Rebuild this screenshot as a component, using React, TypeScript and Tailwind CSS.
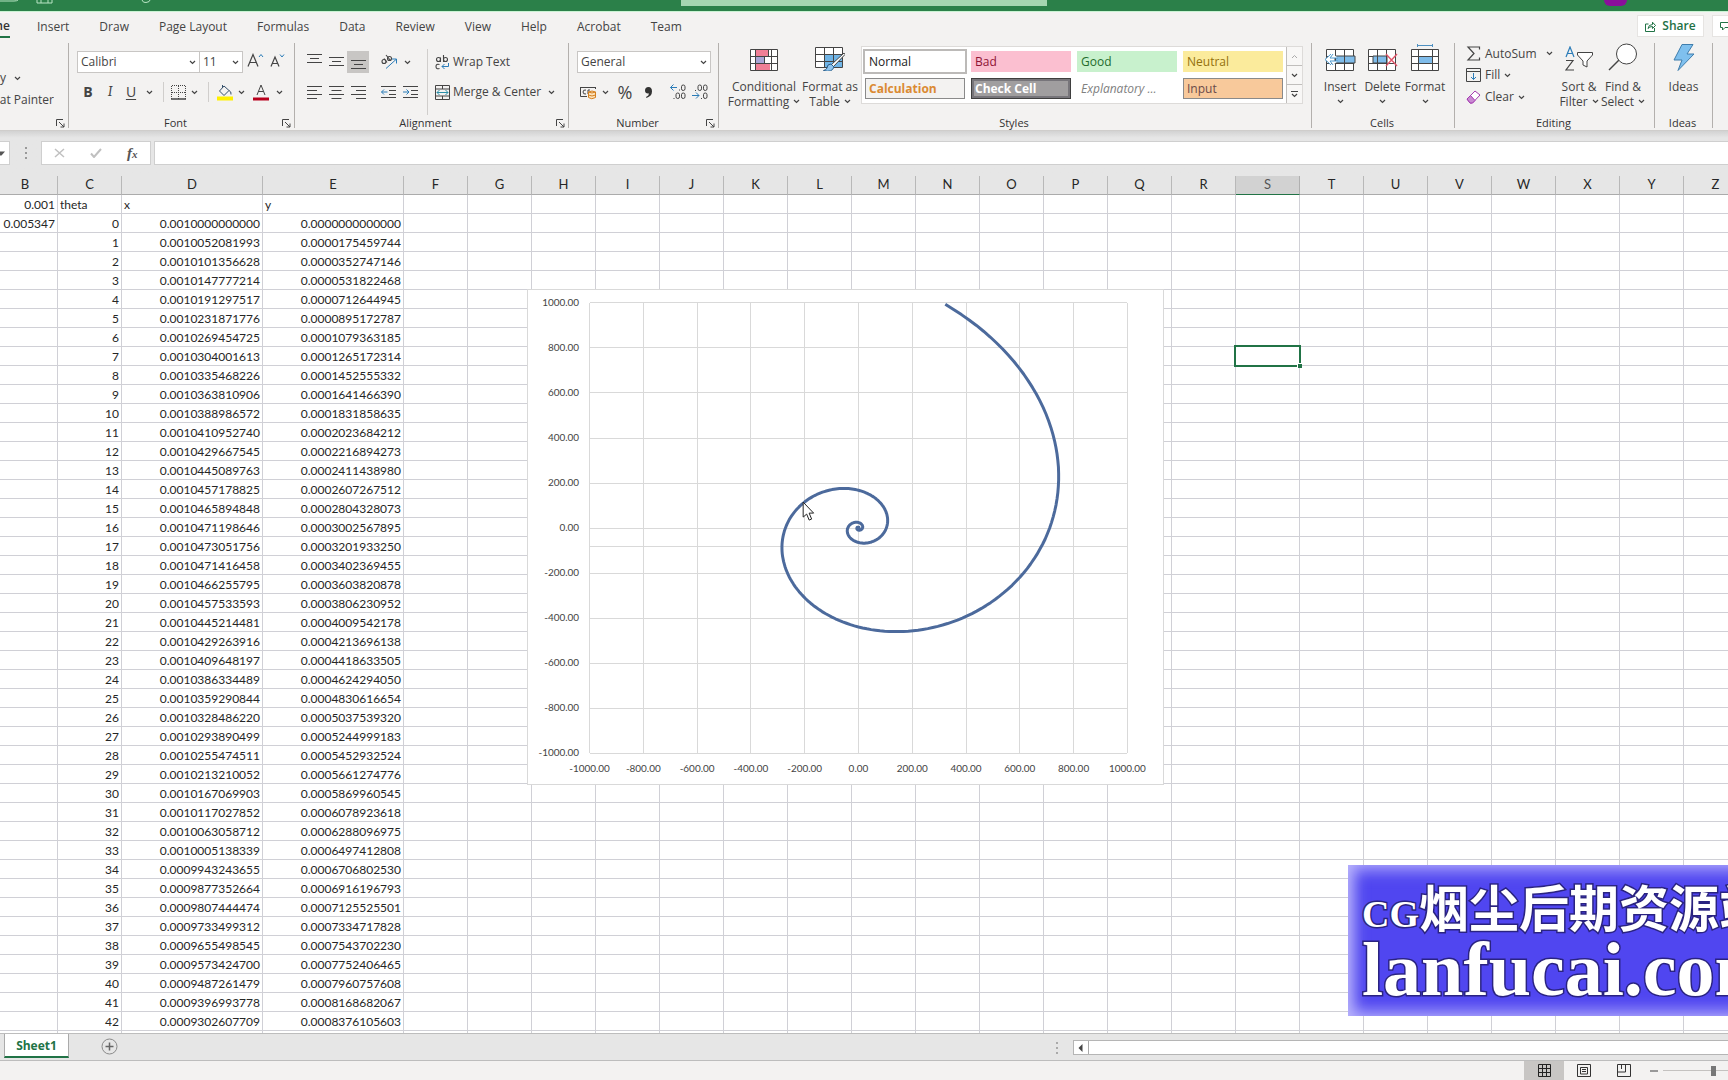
import type { ReactNode } from 'react';

const GROWTH = 0.005347;
const START = 0.001;
const COLUMNS = 'BCDEFGHIJKLMNOPQRSTUVWXYZ'.split('');
const TABS = ['Insert', 'Draw', 'Page Layout', 'Formulas', 'Data', 'Review', 'View', 'Help', 'Acrobat', 'Team'];

function spiral(deg: number) {
  const r = START * Math.exp(GROWTH * deg);
  const t = (deg * Math.PI) / 180;
  return { x: r * Math.cos(t), y: r * Math.sin(t) };
}

function Icon({ w, h, children }: { w: number; h: number; children: ReactNode }) {
  return (
    <svg width={w} height={h} viewBox={`0 0 ${w} ${h}`} fill="none" stroke="#444" className="shrink-0" aria-hidden="true">
      {children}
    </svg>
  );
}

function Chevron() {
  return (
    <Icon w={7} h={5}>
      <path d="M1 1l2.5 2.5L6 1" strokeWidth="1.2" />
    </Icon>
  );
}

function Tool({ label, className = '', children }: { label: string; className?: string; children: ReactNode }) {
  return (
    <button type="button" aria-label={label} className={`flex h-[22px] shrink-0 items-center justify-center ${className}`}>
      {children}
    </button>
  );
}

function Divider() {
  return <span className="h-5 w-px shrink-0 bg-[#d0cecc]" />;
}

function Group({ name, launcher, className, children }: { name: string; launcher?: boolean; className: string; children?: ReactNode }) {
  return (
    <section className={`flex h-[85px] shrink-0 flex-col justify-between border-r border-[#b3b0ad] ${className}`}>
      <div className="flex h-18">{children}</div>
      <div className="flex h-2.5 items-center pr-0.5">
        <span className="flex-1 text-center text-[11px] leading-[10px] text-[#333]">{name}</span>
        {launcher && (
          <button type="button" aria-label={`${name} settings`} className="w-2.5">
            <Icon w={9} h={9}>
              <path d="M.5 7V.5H7M3 3l5 5M8 4.5V8H4.5" />
            </Icon>
          </button>
        )}
      </div>
    </section>
  );
}

function BigButton({ lines, chevron, className, children }: { lines: string[]; chevron?: 'inline' | 'below'; className: string; children: ReactNode }) {
  return (
    <button type="button" className={`flex shrink-0 flex-col items-center ${className}`}>
      <span className="mb-1 flex h-8 items-end justify-center pb-1">{children}</span>
      {lines.map((line, i) => (
        <span key={line} className="flex h-[15px] items-center gap-1 leading-[15px] whitespace-nowrap">
          {line}
          {chevron === 'inline' && i === lines.length - 1 && <Chevron />}
        </span>
      ))}
      {chevron === 'below' && (
        <span className="flex h-[15px] items-center">
          <Chevron />
        </span>
      )}
    </button>
  );
}

function Lines({ d }: { d: string }) {
  return (
    <Icon w={15} h={14}>
      <path d={d} />
    </Icon>
  );
}

function TitleBar() {
  return (
    <header className="flex h-3 shrink-0 items-start border-b border-[#c9f3d3] bg-[#2b8049]">
      <div className="flex w-[39.4%] items-start">
        <Icon w={160} h={4}>
          <g stroke="#b9e4c5">
            <path d="M0 1h14q3 0 4-1M37 0v3h15V0M41 3V0M48 3V0M142 0q1 3 4 2.500q4-.5 4-2.500" />
          </g>
        </Icon>
      </div>
      <div className="h-1.5 w-[21.2%] bg-[#a5d6b1]" />
      <div className="flex flex-1 justify-end pr-[101px]">
        <span className="h-1.5 w-[23px] rounded-b-full bg-[#8a0f9b]" />
      </div>
    </header>
  );
}

function TabRow() {
  return (
    <nav className="flex h-[31px] shrink-0 items-start pt-[3px] text-[12px] text-[#444]">
      <a href="#home" className="flex h-[23px] w-2.5 items-center justify-end overflow-hidden border-b-2 border-[#217346] font-semibold text-[#333]">
        Home
      </a>
      <div className="ml-[27px] flex gap-[30px]">
        {TABS.map((tab) => (
          <a key={tab} href={`#${tab}`} className="flex h-[23px] items-center">
            {tab}
          </a>
        ))}
      </div>
      <button type="button" className="ml-auto flex h-[22px] w-[67px] items-center justify-center gap-1.5 border border-[#e6e4e2] bg-white font-semibold text-[#1e7145]">
        <Icon w={11} h={11}>
          <path d="M3.500 3H.5v7.500h9V7M3 7.500q.5-4 4.500-4V1.200L10.500 4.500l-3 3V5.500q-3 0-4.500 2z" stroke="#217346" />
        </Icon>
        Share
      </button>
      <button type="button" aria-label="Comments" className="ml-2 flex h-[22px] w-4 items-center justify-end overflow-hidden border border-r-0 border-[#e6e4e2] bg-white">
        <Icon w={8} h={10}>
          <path d="M8 1.500H.5v5h2V9l2.500-2.500H8" stroke="#217346" />
        </Icon>
      </button>
    </nav>
  );
}

function ClipboardGroup() {
  return (
    <Group name="" launcher className="w-[69px]">
      <div className="flex flex-col pt-[25px]">
        <span className="flex h-5 items-center gap-2">
          y <Chevron />
        </span>
        <button type="button" className="flex h-6 w-[54px] items-center justify-end overflow-hidden whitespace-nowrap">
          Format Painter
        </button>
      </div>
    </Group>
  );
}

function FontGroup() {
  return (
    <Group name="Font" launcher className="w-[226px]">
      <div className="flex flex-col gap-2 pt-2 pl-2">
        <div className="flex">
          <Picker label="Font name" value="Calibri" className="w-[123px]" />
          <Picker label="Font size" value="11" className="-ml-px w-11" />
          <Tool label="Increase font size" className="ml-0.5 w-5 pb-1">
            <Icon w={17} h={15}>
              <path d="M1 13.500L6 1.500l5 12M2.800 9.500h6.400" strokeWidth="1.200" />
              <path d="M12 4l2-2.500L16 4" stroke="#2b7cb8" />
            </Icon>
          </Tool>
          <Tool label="Decrease font size" className="ml-0.5 w-5 pb-1">
            <Icon w={15} h={15}>
              <path d="M1 13.500L5 4l4 9.500M2.500 10.500h5" strokeWidth="1.200" />
              <path d="M10 1.500L12 4l2-2.500" stroke="#2b7cb8" />
            </Icon>
          </Tool>
        </div>
        <div className="flex items-center">
          <Tool label="Bold" className="w-[22px] text-sm font-bold">B</Tool>
          <Tool label="Italic" className="w-[22px] font-serif text-sm italic">I</Tool>
          <Tool label="Underline" className="w-5 text-sm underline underline-offset-2">U</Tool>
          <Tool label="Underline style" className="mr-1.5 w-4"><Chevron /></Tool>
          <Divider />
          <Tool label="Borders" className="ml-1.5 w-4">
            <Icon w={15} h={15}>
              <path d="M.5 14V.5H14.500V14M7.500 1v13M1 7.500h13" strokeDasharray="1 1" />
              <path d="M0 14h15" strokeWidth="1.500" />
            </Icon>
          </Tool>
          <Tool label="Border style" className="mr-1.5 w-4"><Chevron /></Tool>
          <Divider />
          <Tool label="Fill colour" className="ml-2 w-4">
            <Icon w={16} h={17}>
              <path d="M7 2l5 4.500-5 5L2.500 7zM5.500 4V1M12 6.500q2.500 1 2 4" stroke="#35506b" />
              <path d="M0 14.500h16" stroke="#fff000" strokeWidth="4" />
            </Icon>
          </Tool>
          <Tool label="Fill colours" className="w-4"><Chevron /></Tool>
          <Tool label="Font colour" className="ml-1 w-4">
            <Icon w={16} h={17}>
              <path d="M4 11l4-10 4 10M5.500 7.500h5" />
              <path d="M0 15h16" stroke="#b8001c" strokeWidth="3" />
            </Icon>
          </Tool>
          <Tool label="Font colours" className="ml-0.5 w-4"><Chevron /></Tool>
        </div>
      </div>
    </Group>
  );
}

function Picker({ label, value, className }: { label: string; value: string; className: string }) {
  return (
    <span className={`relative flex h-[22px] items-center border border-[#c8c6c4] bg-white ${className}`}>
      <select aria-label={label} className="h-full w-full appearance-none pl-[3px] text-[12px] outline-none">
        <option>{value}</option>
      </select>
      <span className="pointer-events-none absolute right-[3px]">
        <Chevron />
      </span>
    </span>
  );
}

function AlignmentGroup() {
  return (
    <Group name="Alignment" launcher className="w-[274px]">
      <div className="flex flex-col gap-2 pt-2 pl-2">
        <div className="flex items-center">
          <Tool label="Top align" className="w-[22px] pb-1.5"><Lines d="M0 2.500h15M3 6.500h9M0 10.500h15" /></Tool>
          <Tool label="Middle align" className="w-[22px]"><Lines d="M0 2.500h15M3 6.500h9M0 10.500h15" /></Tool>
          <Tool label="Bottom align" className="w-[22px] bg-[#c8c6c4] pt-1.5"><Lines d="M0 2.500h15M3 6.500h9M0 10.500h15" /></Tool>
          <span className="ml-1"><Divider /></span>
          <Tool label="Orientation" className="ml-1.5 w-5">
            <Icon w={18} h={16}>
              <g strokeWidth="1.100">
                <circle cx="4" cy="7.500" r="2" />
                <path d="M4 4.500L7 8.500M6 1l4.500 5.500" />
                <circle cx="9.500" cy="4.500" r="2" />
              </g>
              <path d="M6 14.500L16 5.500M12 5h4.500v4.500" stroke="#2b7cb8" />
            </Icon>
          </Tool>
          <Tool label="Orientation options" className="w-4"><Chevron /></Tool>
        </div>
        <div className="flex items-center">
          <Tool label="Align left" className="w-[22px]"><Lines d="M0 1.500h15M0 5.500h10M0 9.500h15M0 13.500h10" /></Tool>
          <Tool label="Center" className="w-[22px]"><Lines d="M0 1.500h15M2.500 5.500h10M0 9.500h15M2.500 13.500h10" /></Tool>
          <Tool label="Align right" className="w-[22px]"><Lines d="M0 1.500h15M5 5.500h10M0 9.500h15M5 13.500h10" /></Tool>
          <span className="ml-1"><Divider /></span>
          <Tool label="Decrease indent" className="ml-1 w-[22px]">
            <Icon w={15} h={14}>
              <path d="M0 1.500h15M8 5.500h7M8 9.500h7M0 12.500h15" />
              <path d="M6.500 7h-6M3 4.500L.5 7 3 9.500" stroke="#2b7cb8" />
            </Icon>
          </Tool>
          <Tool label="Increase indent" className="w-[22px]">
            <Icon w={15} h={14}>
              <path d="M0 1.500h15M8 5.500h7M8 9.500h7M0 12.500h15" />
              <path d="M0 7h6M3.500 4.500L6 7 3.500 9.500" stroke="#2b7cb8" />
            </Icon>
          </Tool>
        </div>
      </div>
      <div className="mt-1.5 ml-1.5 flex flex-col gap-2 border-l border-[#d0cecc] pt-0.5 pl-[7px]">
        <button type="button" className="flex h-[22px] items-center gap-[3px] whitespace-nowrap">
          <Icon w={15} h={15}>
            <g strokeWidth="1.100">
              <circle cx="3.500" cy="4.500" r="2" />
              <path d="M5.500 2.500V7M8.500 0v7M4.500 9.500q-3.500-1-3.500 2t3.500 2" />
              <circle cx="10.500" cy="4.500" r="2" />
            </g>
            <path d="M13.500 8v3.500H7M9.500 9L7 11.500 9.500 14" stroke="#2b7cb8" />
          </Icon>
          Wrap Text
        </button>
        <button type="button" className="flex h-[22px] items-center gap-[3px] whitespace-nowrap">
          <Icon w={15} h={15}>
            <path d="M.5.5h14v14H.5zM.5 4h14M.5 11h14M7.500.5V4M7.500 11v3.500" />
            <path d="M2 7.500h11M4.500 5L2 7.500 4.500 10M10.500 5L13 7.500 10.500 10" stroke="#2b8fa8" />
          </Icon>
          Merge &amp; Center
          <span className="ml-1"><Chevron /></span>
        </button>
      </div>
    </Group>
  );
}

function NumberGroup() {
  return (
    <Group name="Number" launcher className="w-[150px]">
      <div className="flex flex-col gap-2 pt-2 pl-2">
        <Picker label="Number format" value="General" className="w-[134px]" />
        <div className="flex items-center">
          <Tool label="Accounting format" className="ml-0.5 w-[18px]">
            <Icon w={17} h={15}>
              <path d="M.5 2.500h15M.5 2v9.500H7M15.500 2v2M6 5q-3-.5-3 2t3 2M8 9V5h2" />
              <path d="M8.500 7v5.500q3 2.500 7 0V7q-3.500-2-7 0zM8.500 7q3.500 2 7 0M8.500 10q3.500 2 7 0" stroke="#d5801f" fill="#fce3bd" />
            </Icon>
          </Tool>
          <Tool label="Currency" className="mr-0.5 w-4"><Chevron /></Tool>
          <Tool label="Percent style" className="w-5 text-lg">%</Tool>
          <Tool label="Comma style" className="ml-1 w-[18px]">
            <Icon w={9} h={13}>
              <path d="M4.500 1q3.500 0 3.500 4.500 0 4.500-5.500 6.500l-.5-1q3-1.500 3-3.500-4 .5-4-3Q1 1 4.500 1z" fill="#333" stroke="none" />
            </Icon>
          </Tool>
          <span className="mr-1.5 ml-1"><Divider /></span>
          <Tool label="Increase decimal" className="w-[22px]">
            <Icon w={16} h={16}>
              <path d="M7 3.500H.5M3.500.5l-3 3 3 3" stroke="#2b7cb8" />
              <rect x="11.500" y="1" width="3.500" height="5.500" rx="1.700" />
              <rect x="6" y="9" width="3.500" height="5.500" rx="1.700" />
              <rect x="11.500" y="9" width="3.500" height="5.500" rx="1.700" />
              <path d="M9 6h1M3.500 14.500h1" />
            </Icon>
          </Tool>
          <Tool label="Decrease decimal" className="w-[22px]">
            <Icon w={16} h={16}>
              <path d="M0 11.500h7M4 8.500l3 3-3 3" stroke="#2b7cb8" />
              <rect x="6" y="1" width="3.500" height="5.500" rx="1.700" />
              <rect x="11.500" y="1" width="3.500" height="5.500" rx="1.700" />
              <rect x="11.500" y="9" width="3.500" height="5.500" rx="1.700" />
              <path d="M3 6.500h1M9 14.500h1" />
            </Icon>
          </Tool>
        </div>
      </div>
    </Group>
  );
}

const STYLE_CELLS = [
  { name: 'Normal', look: 'border-white bg-white text-[#222] outline-2 outline-[#bcbab8]' },
  { name: 'Bad', look: 'border-[#fbbfd0] bg-[#fbbfd0] text-[#8f1335]' },
  { name: 'Good', look: 'border-[#c8f1cd] bg-[#c8f1cd] text-[#236b2c]' },
  { name: 'Neutral', look: 'border-[#fbeb9c] bg-[#fbeb9c] text-[#93700c]' },
  { name: 'Calculation', look: 'border-[#8a8a8a] bg-[#f3f2f1] font-bold text-[#db8a33]' },
  { name: 'Check Cell', look: 'border-[#3f3f3f] bg-[#a09e9f] font-bold text-white inset-ring-2 inset-ring-[#77757a]' },
  { name: 'Explanatory ...', look: 'border-white bg-white text-[#808080] italic' },
  { name: 'Input', look: 'border-[#8a8a8a] bg-[#f8c99b] text-[#6a4a4a]' },
];

function StylesGroup() {
  return (
    <Group name="Styles" className="w-[593px]">
      <BigButton lines={['Conditional', 'Formatting']} chevron="inline" className="ml-2.5 w-[70px]">
        <Icon w={28} h={22}>
          <path d="M.5.5h27v21H.5z" fill="#fff" />
          <path d="M6 1h12v6H6zM6 15h14v6H6z" fill="#f07f96" stroke="none" />
          <path d="M6 7h8v8H6z" fill="#a9a5d6" stroke="none" />
          <path d="M0 7.500h28M0 14.500h28M5.500 0v22M21.500 0v22M14.500 8v6M18.500 1v6" stroke="#444" />
        </Icon>
      </BigButton>
      <BigButton lines={['Format as', 'Table']} chevron="inline" className="w-[62px]">
        <Icon w={30} h={25}>
          <path d="M.5 1.500h27v20H.5z" fill="#fff" />
          <path d="M9 8h18v13H9z" fill="#6fb4e6" stroke="none" />
          <path d="M0 8.500h28M0 15.500h28M9.500 1v21M18.500 1v21" />
          <path d="M29 7L16 19l2 2L30 8.500z" fill="#fff" />
          <path d="M16 18q-4 0-4 4-1 2-3.500 2.500Q17 27 19 21z" fill="#8fc4ee" stroke="#2b5f8a" />
        </Icon>
      </BigButton>
      <div className="mt-[3px] flex h-[58px] border border-[#dddbd9] bg-white">
        <div className="grid grid-cols-4 content-start gap-x-1.5 gap-y-1.5 px-[3px] pt-1">
          {STYLE_CELLS.map((cell) => (
            <button key={cell.name} type="button" className={`flex h-[21px] w-25 items-center border pl-[3px] text-[12px] whitespace-nowrap ${cell.look}`}>
              {cell.name}
            </button>
          ))}
        </div>
        <div className="flex w-4 flex-col divide-y divide-[#c0bebc] border-l border-[#c0bebc] bg-[#f8f7f6]">
          <button type="button" aria-label="Scroll up" className="flex flex-1 items-center justify-center">
            <Icon w={7} h={5}><path d="M1 4l2.500-2.500L6 4" stroke="#aaa" /></Icon>
          </button>
          <button type="button" aria-label="Scroll down" className="flex flex-1 items-center justify-center"><Chevron /></button>
          <button type="button" aria-label="More styles" className="flex flex-1 items-center justify-center">
            <Icon w={7} h={8}><path d="M0 1.500h7M1 4l2.500 2.500L6 4" strokeWidth="1.200" /></Icon>
          </button>
        </div>
      </div>
    </Group>
  );
}

function CellsGroup() {
  return (
    <Group name="Cells" className="w-[143px]">
      <BigButton lines={['Insert']} chevron="below" className="ml-[7px] w-[42px]">
        <Icon w={32} h={22}>
          <path d="M2.500.5h27v21h-27z" fill="#fff" />
          <path d="M11 7h20v7H11z" fill="#7fbcea" />
          <path d="M2 7.500h9M2 14.500h28M11.500 0v22M20.500 0v22" />
          <path d="M14 9H6l3-4M14 12H6l3 4M7 5l-6 5.500L7 16" stroke="#4d9ad0" fill="#fff" />
        </Icon>
      </BigButton>
      <BigButton lines={['Delete']} chevron="below" className="w-[43px]">
        <Icon w={30} h={22}>
          <path d="M.5.5h27v21H.5z" fill="#fff" />
          <path d="M5 7h14v7H5z" fill="#7fbcea" />
          <path d="M0 7.500h5M0 14.500h28M9.500 0v22M18.500 0v22" />
          <path d="M18 5l11 12M29 5L18 17" stroke="#e0566a" strokeWidth="1.400" />
        </Icon>
      </BigButton>
      <BigButton lines={['Format']} chevron="below" className="w-[42px]">
        <Icon w={28} h={27}>
          <path d="M6 1.500h16M6.500 0v3M21.500 0v3" stroke="#4d8fc0" />
          <path d="M.5 5.500h27v21H.5z" fill="#fff" />
          <path d="M8 12h13v7H8z" fill="#7fbcea" stroke="none" />
          <path d="M0 12.500h28M0 19.500h28M7.500 5v22M21.500 5v22" />
        </Icon>
      </BigButton>
    </Group>
  );
}

function EditingGroup() {
  return (
    <Group name="Editing" className="w-[200px]">
      <div className="flex w-[102px] flex-col pl-[11px]">
        <button type="button" className="flex h-[21px] items-center gap-1 whitespace-nowrap">
          <Icon w={15} h={15}><path d="M13.500 3.500V1H2l6 6.500L2 14h11.500v-2.500" strokeWidth="1.200" /></Icon>
          AutoSum
          <span className="ml-auto pr-1"><Chevron /></span>
        </button>
        <button type="button" className="flex h-[22px] items-center gap-1 whitespace-nowrap">
          <Icon w={15} h={14}>
            <path d="M.5.5h14v13H.5zM0 3.500h15" />
            <path d="M7.500 5v6.500M5 9l2.500 2.500L10 9" stroke="#2b7cb8" />
          </Icon>
          Fill <Chevron />
        </button>
        <button type="button" className="flex h-[22px] items-center gap-1 whitespace-nowrap">
          <Icon w={15} h={14}>
            <path d="M1 9l8-8 5 4-7.500 8H4z" stroke="#a43cb0" fill="#fff" />
            <path d="M1 9l3.500-3.500 4.500 5L6.500 13H4z" fill="#c98ad2" stroke="#a43cb0" />
          </Icon>
          Clear <Chevron />
        </button>
      </div>
      <BigButton lines={['Sort &', 'Filter']} chevron="inline" className="w-11">
        <Icon w={28} h={25}>
          <path d="M1 11L5 1l4 10M2.500 7.500h5" stroke="#2b7cb8" strokeWidth="1.200" />
          <path d="M1 14.500h7L1 24h8" strokeWidth="1.200" />
          <path d="M12.500 6.500h15V9l-5.500 6v6l-4-2v-4l-5.500-6z" fill="#fff" />
        </Icon>
      </BigButton>
      <BigButton lines={['Find &', 'Select']} chevron="inline" className="w-11">
        <Icon w={30} h={28}>
          <path d="M1 27l10-10" strokeWidth="1.500" />
          <circle cx="18.500" cy="11" r="10" fill="#fff" />
        </Icon>
      </BigButton>
    </Group>
  );
}

function Ribbon() {
  return (
    <div className="flex h-22 shrink-0 border-b border-[#cfcdcb] text-[12px] text-[#444]">
      <ClipboardGroup />
      <FontGroup />
      <AlignmentGroup />
      <NumberGroup />
      <StylesGroup />
      <CellsGroup />
      <EditingGroup />
      <Group name="Ideas" className="w-[58px]">
        <BigButton lines={['Ideas']} className="w-full">
          <Icon w={22} h={27}>
            <path d="M9 .5h11L14 10h7L5 26.500l4-10.500H1z" fill="#7fc0ee" stroke="#3f7dac" />
          </Icon>
        </BigButton>
      </Group>
    </div>
  );
}

function FormulaBar() {
  return (
    <div className="flex h-[45px] shrink-0 items-start bg-linear-to-b from-[#d2d2d2] to-[#e6e6e6] to-15% pt-2.5">
      <span className="flex h-6 w-2.5 items-center border border-l-0 border-[#cfcfcf] bg-white">
        <Icon w={6} h={5}><path d="M0 .5h5L1.500 4.500H0z" fill="#555" stroke="none" /></Icon>
      </span>
      <span className="flex h-6 w-[31px] items-center justify-center">
        <Icon w={2} h={12}><path d="M1 0v12" stroke="#999" strokeDasharray="2 3" strokeWidth="2" /></Icon>
      </span>
      <div className="flex h-6 w-[110px] items-center justify-around border border-[#cfcfcf] bg-white">
        <button type="button" aria-label="Cancel">
          <Icon w={11} h={10}><path d="M1 1l9 8M10 1L1 9" stroke="#c0c0c0" strokeWidth="1.500" /></Icon>
        </button>
        <button type="button" aria-label="Enter">
          <Icon w={12} h={10}><path d="M1 5.500L4 9l7-8" stroke="#c0c0c0" strokeWidth="2" /></Icon>
        </button>
        <button type="button" aria-label="Insert function" className="font-['Liberation_Serif',serif] text-[15px] leading-5 font-bold text-[#555] italic">
          f<span className="text-[11px]">x</span>
        </button>
      </div>
      <input aria-label="Formula" className="ml-[3px] h-6 min-w-0 flex-1 border border-r-0 border-[#cfcfcf] bg-white px-2 outline-none" />
    </div>
  );
}

function colWidth(col: string) {
  if (col === 'B') return 'w-[58px]';
  return col === 'D' || col === 'E' ? 'w-[141px]' : 'w-16';
}

function cellText(col: string, row: number) {
  if (row === 0) return { B: '0.001', C: 'theta', D: 'x', E: 'y' }[col] ?? '';
  if (row > 43) return '';
  const point = spiral(row - 1);
  if (col === 'B') return row === 1 ? String(GROWTH) : '';
  if (col === 'C') return String(row - 1);
  if (col === 'D') return point.x.toFixed(13);
  if (col === 'E') return point.y.toFixed(13);
  return '';
}

function Grid() {
  return (
    <table className="w-[1748px] table-fixed border-separate border-spacing-0 font-['Lato','Liberation_Sans',sans-serif] text-[12px] text-[#262626]">
      <colgroup>
        {COLUMNS.map((col) => (
          <col key={col} className={colWidth(col)} />
        ))}
      </colgroup>
      <thead>
        <tr>
          {COLUMNS.map((col) => (
            <th
              key={col}
              scope="col"
              className={`h-[19px] border-r border-b p-0 pb-0.5 text-[13px] leading-4 font-normal ${col === 'B' ? 'pr-[7px]' : ''} ${
                col === 'S' ? 'border-r-[#b0b0b0] border-b-[#217346] bg-[#d2d2d2] text-[#555]' : 'border-r-[#b8b8b8] border-b-[#ababab] bg-[#e6e6e6]'
              }`}
            >
              {col}
            </th>
          ))}
        </tr>
      </thead>
      <tbody>
        {Array.from({ length: 45 }, (_, row) => (
          <tr key={row}>
            {COLUMNS.map((col) => (
              <td
                key={col}
                className={`relative h-[19px] border-r border-b border-[#d0d0d6] px-0.5 pt-0.5 pb-0 leading-4 whitespace-nowrap ${
                  row === 0 && col !== 'B' ? 'text-left' : 'text-right'
                }`}
              >
                {cellText(col, row)}
                {row === 8 && col === 'S' && (
                  <span className="absolute -inset-0.5 z-10 border-2 border-[#217346]">
                    <span className="absolute -right-[3px] -bottom-[3px] size-[5px] border-t border-l border-white bg-[#217346]" />
                  </span>
                )}
              </td>
            ))}
          </tr>
        ))}
      </tbody>
    </table>
  );
}

function Chart() {
  const ticks = Array.from({ length: 11 }, (_, i) => i * 200 - 1000);
  const px = (x: number) => 331.5 + x * 0.27;
  const py = (y: number) => 239 - y * 0.226;
  const points: string[] = [];
  for (let deg = 0; deg <= 2592; deg += 2) {
    const p = spiral(deg);
    points.push(`${px(p.x).toFixed(1)},${py(p.y).toFixed(1)}`);
  }
  return (
    <svg
      viewBox="0 0 637 496"
      className="absolute top-[113px] left-[527px] z-10 h-[496px] w-[637px] border border-[#d9d9d9] bg-white font-['Lato','Liberation_Sans',sans-serif] text-[10px]"
      role="img"
      aria-label="Spiral chart"
    >
      <g stroke="#d9d9d9" shapeRendering="crispEdges">
        {ticks.map((t) => (
          <g key={t}>
            <line x1={px(t)} x2={px(t)} y1={py(1000)} y2={py(-1000)} />
            <line x1={px(-1000)} x2={px(1000)} y1={py(t)} y2={py(t)} />
          </g>
        ))}
        <line x1={px(-1000)} x2={px(1000)} y1={py(-80)} y2={py(-80)} />
      </g>
      <g fill="#444">
        {ticks.map((t) => (
          <g key={t}>
            <text x={51} y={py(t) + 3} textAnchor="end">{t.toFixed(2)}</text>
            <text x={px(t)} y={484} textAnchor="middle">{t.toFixed(2)}</text>
          </g>
        ))}
      </g>
      <polyline points={points.join(' ')} fill="none" stroke="#4c6a9c" strokeWidth="3" strokeLinejoin="round" />
      <path d="M276 213v15l3.500-3 2.500 6 2.500-1-2.500-6h4.500z" fill="#fff" stroke="#222" />
    </svg>
  );
}

function Banner() {
  return (
    <div className="absolute -right-5 bottom-[17px] z-10 h-[151px] w-[400px] overflow-hidden bg-[#5046f0] pl-3.5 font-['Liberation_Serif','Noto_Sans_CJK_SC',serif] font-bold whitespace-nowrap text-white shadow-[inset_8px_0_14px_rgba(220,216,255,0.5),inset_0_8px_14px_rgba(190,184,255,0.5),inset_0_-8px_14px_rgba(190,184,255,0.5)] [-webkit-text-stroke:3px_#2a2380] [paint-order:stroke_fill]">
      <p className="mt-4 h-[58px] text-[50px] leading-[58px]">
        <span className="text-[38px]">CG</span>烟尘后期资源站
      </p>
      <p className="h-[60px] text-[76px] leading-[60px]">lanfucai.com</p>
    </div>
  );
}

function SheetTabs() {
  return (
    <div className="flex h-7 shrink-0 items-start border-t border-b border-[#bdbdbd] bg-[#e6e6e6]">
      <button type="button" className="ml-1 h-6 w-[65px] border-r border-b-2 border-l border-r-[#aaa] border-b-[#217346] border-l-[#aaa] bg-white pt-0.5 text-[12px] font-bold text-[#217346]">
        Sheet1
      </button>
      <button type="button" aria-label="New sheet" className="mt-1 ml-8">
        <Icon w={17} h={17}>
          <circle cx="8.500" cy="8.500" r="7.500" stroke="#8a8a8a" />
          <path d="M8.500 4.500v8M4.500 8.500h8" stroke="#666" strokeWidth="1.500" />
        </Icon>
      </button>
      <div className="mt-1.5 ml-auto flex w-[38.9%] items-center">
        <Icon w={2} h={12}><path d="M1 0v12" stroke="#aaa" strokeDasharray="2 3" strokeWidth="2" /></Icon>
        <div className="ml-[15px] flex h-[15px] flex-1 border border-r-0 border-[#b5b5b5] bg-white">
          <button type="button" aria-label="Scroll left" className="flex w-[15px] items-center justify-center border-r border-[#aaa]">
            <Icon w={5} h={8}><path d="M4.500 0v8L.5 4z" fill="#444" stroke="none" /></Icon>
          </button>
        </div>
      </div>
    </div>
  );
}

function StatusBar() {
  return (
    <footer className="flex h-[19px] shrink-0 items-center justify-end bg-[#f3f2f1]">
      <button type="button" aria-label="Normal view" className="flex h-full w-10 items-center justify-center bg-[#c8c6c4]">
        <Icon w={13} h={13}><path d="M.5.5h12v12H.5zM4.500 0v13M8.500 0v13M0 4.500h13M0 8.500h13" stroke="#222" /></Icon>
      </button>
      <button type="button" aria-label="Page layout view" className="flex w-10 justify-center">
        <Icon w={14} h={13}><path d="M.5.5h13v12H.5zM3.500 3.500h7v6.500h-7zM5 5.500h4M5 7.500h4" stroke="#333" /></Icon>
      </button>
      <button type="button" aria-label="Page break view" className="flex w-10 justify-center">
        <Icon w={14} h={13}><path d="M.5.5h13v12H.5zM.5 8h8V.5M4.500 0v5" stroke="#333" /></Icon>
      </button>
      <button type="button" aria-label="Zoom out" className="mr-[5px] ml-1.5">
        <Icon w={8} h={2}><path d="M0 1h8" stroke="#999" strokeWidth="2" /></Icon>
      </button>
      <input
        type="range"
        aria-label="Zoom"
        defaultValue={80}
        className="h-2.5 w-[65px] appearance-none bg-[linear-gradient(#c4c2c0,#c4c2c0)] bg-[length:100%_1px] bg-center bg-no-repeat [&::-webkit-slider-thumb]:h-2.5 [&::-webkit-slider-thumb]:w-[5px] [&::-webkit-slider-thumb]:appearance-none [&::-webkit-slider-thumb]:bg-[#777]"
      />
    </footer>
  );
}

export default function App() {
  return (
    <div className="flex h-screen flex-col overflow-hidden bg-[#f3f2f1] font-['Open_Sans','Liberation_Sans',sans-serif] text-[#444]">
      <TitleBar />
      <TabRow />
      <Ribbon />
      <FormulaBar />
      <main className="relative min-h-0 flex-1 overflow-hidden bg-white">
        <Grid />
        <Chart />
        <Banner />
      </main>
      <SheetTabs />
      <StatusBar />
    </div>
  );
}
